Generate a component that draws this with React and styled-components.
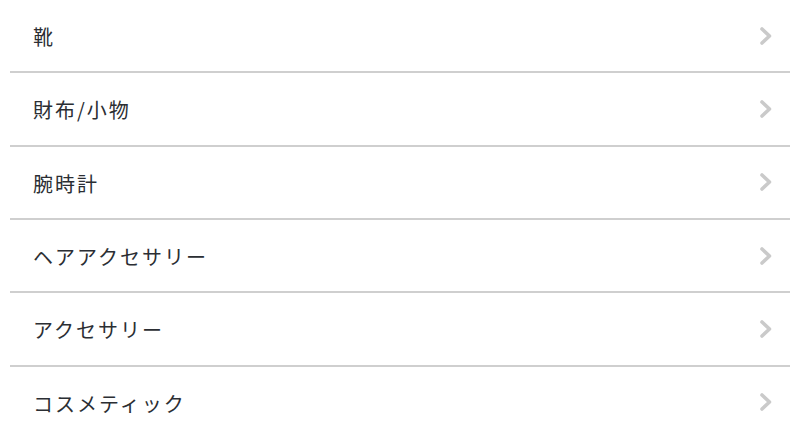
import styled, { createGlobalStyle } from 'styled-components';

const categories = ['靴', '財布/小物', '腕時計', 'ヘアアクセサリー', 'アクセサリー', 'コスメティック'];

export default function App() {
  return (
    <>
      <GlobalStyle />
      <List>
        {categories.map((name) => (
          <Row key={name}>
            <Label>{name}</Label>
            <Chevron />
          </Row>
        ))}
      </List>
    </>
  );
}

const Chevron = () => (
  <ChevronIcon width='14' height='18' viewBox='0 0 14 18'>
    <polyline points='3,2 10.5,9 3,16' fill='none' stroke='#cacaca' strokeWidth='3.6' strokeLinecap='round' strokeLinejoin='round' />
  </ChevronIcon>
);

const GlobalStyle = createGlobalStyle`
  body {
    margin: 0;
    background: #fff;
    font-family: 'Noto Sans CJK JP', 'Noto Sans', sans-serif;
  }
`;

const List = styled.ul`
  list-style: none;
  margin: 0;
  padding: 0 10px;
`;

const Row = styled.li`
  display: flex;
  align-items: center;
  justify-content: space-between;
  height: 71.333px;
  padding: 0 17px 0 23px;
  border-bottom: 2px solid #cfcfcf;
  &:last-child {
    border-bottom: none;
  }
`;

const Label = styled.span`
  font-size: 20px;
  letter-spacing: 2px;
  color: #2b2e33;
  transform: translateY(1px);
`;

const ChevronIcon = styled.svg`
  display: block;
`;
